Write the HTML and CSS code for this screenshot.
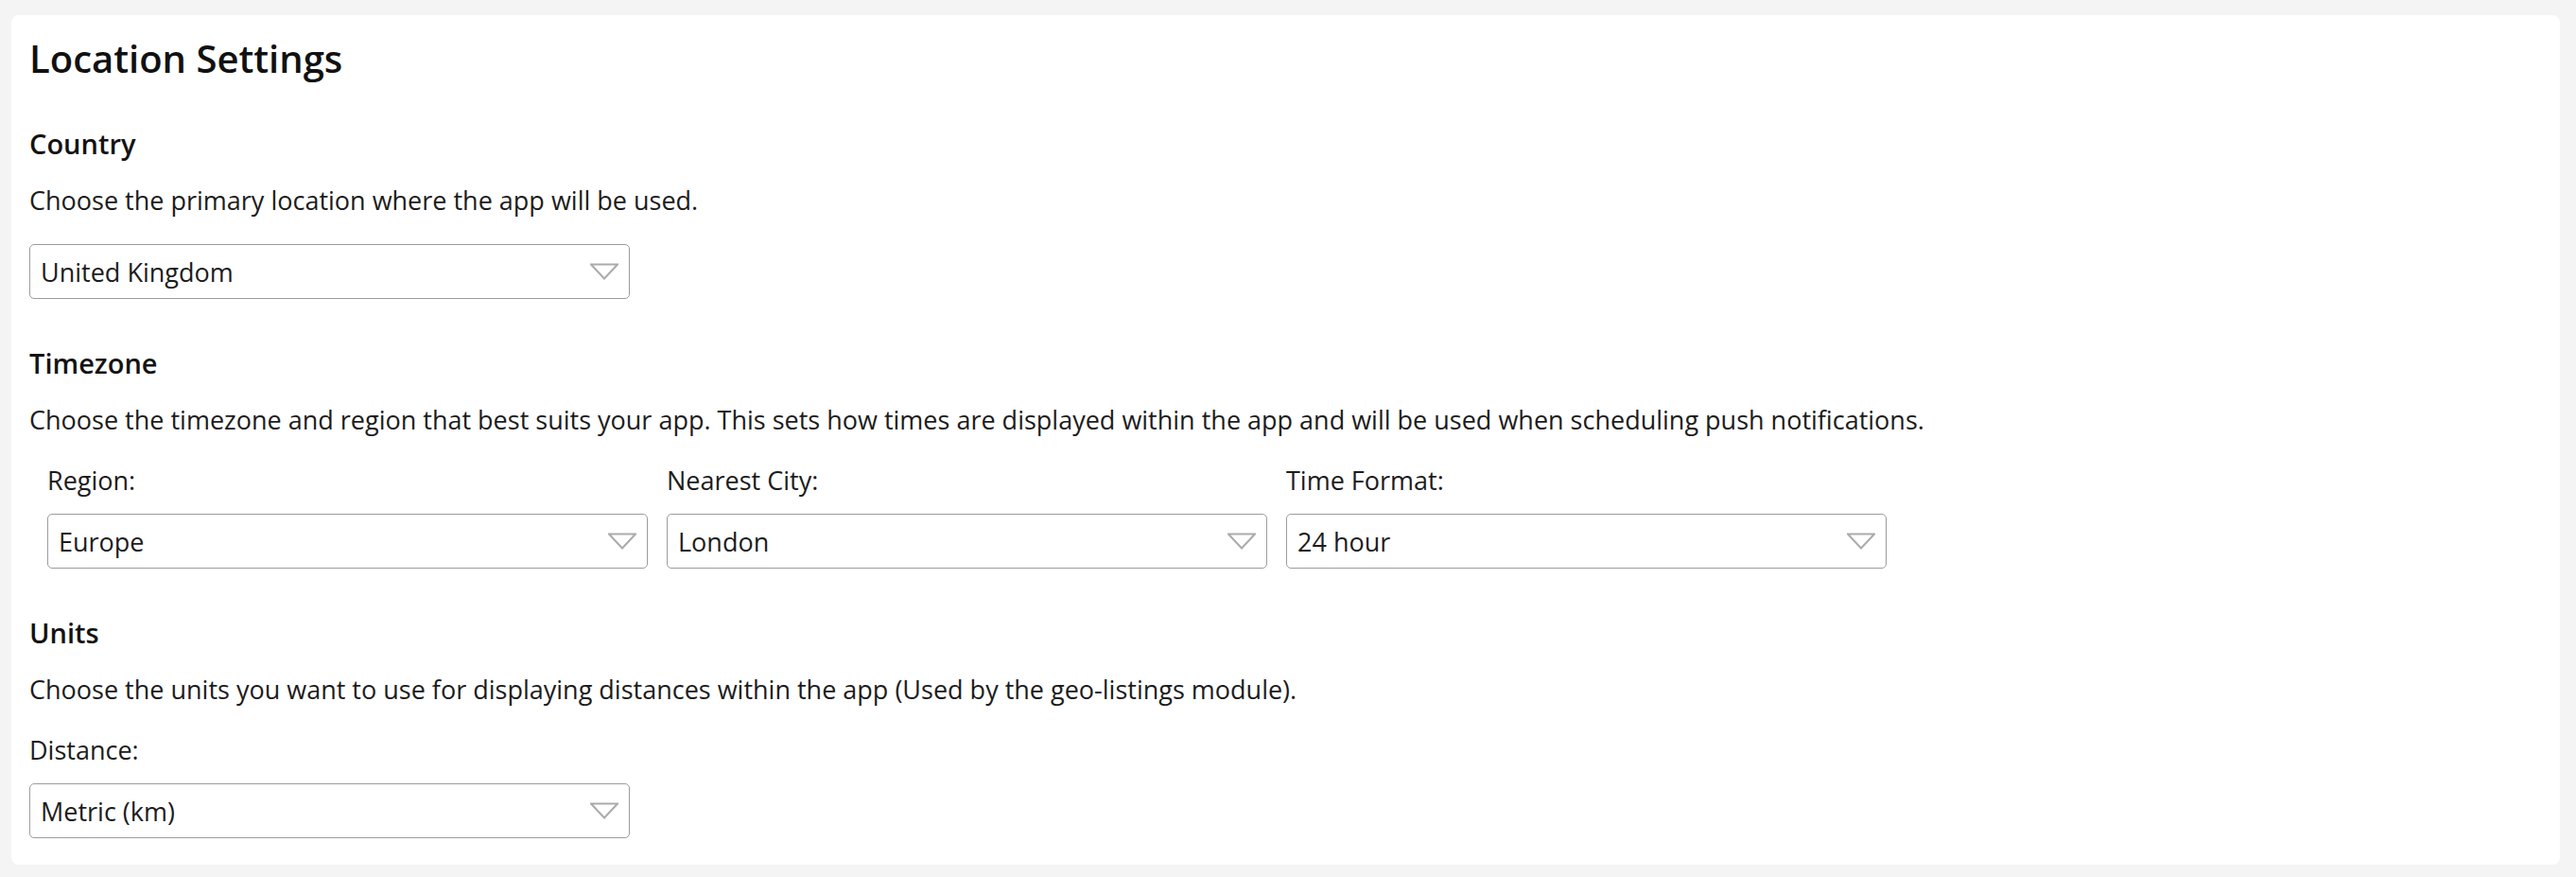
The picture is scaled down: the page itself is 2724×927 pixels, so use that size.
FILE: index.html
```html
<!DOCTYPE html>
<html lang="en">
<head>
<meta charset="utf-8">
<title>Location Settings</title>
<link rel="stylesheet" href="styles.css">
</head>
<body>
<div class="card">
  <h1 class="title">Location Settings</h1>

  <section class="section first">
    <h2 class="heading">Country</h2>
    <p class="desc">Choose the primary location where the app will be used.</p>
    <div class="select">
      <span class="value">United Kingdom</span>
      <svg class="arrow" width="30" height="18" viewBox="0 0 30 18"><polygon points="1,1.5 29,1.5 15,16.5" fill="none" stroke="#ababab" stroke-width="2"/></svg>
    </div>
  </section>

  <section class="section">
    <h2 class="heading">Timezone</h2>
    <p class="desc">Choose the timezone and region that best suits your app. This sets how times are displayed within the app and will be used when scheduling push notifications.</p>
    <div class="row">
      <div class="field">
        <label class="label">Region:</label>
        <div class="select">
          <span class="value">Europe</span>
          <svg class="arrow" width="30" height="18" viewBox="0 0 30 18"><polygon points="1,1.5 29,1.5 15,16.5" fill="none" stroke="#ababab" stroke-width="2"/></svg>
        </div>
      </div>
      <div class="field">
        <label class="label">Nearest City:</label>
        <div class="select">
          <span class="value">London</span>
          <svg class="arrow" width="30" height="18" viewBox="0 0 30 18"><polygon points="1,1.5 29,1.5 15,16.5" fill="none" stroke="#ababab" stroke-width="2"/></svg>
        </div>
      </div>
      <div class="field">
        <label class="label">Time Format:</label>
        <div class="select">
          <span class="value">24 hour</span>
          <svg class="arrow" width="30" height="18" viewBox="0 0 30 18"><polygon points="1,1.5 29,1.5 15,16.5" fill="none" stroke="#ababab" stroke-width="2"/></svg>
        </div>
      </div>
    </div>
  </section>

  <section class="section">
    <h2 class="heading">Units</h2>
    <p class="desc">Choose the units you want to use for displaying distances within the app (Used by the geo-listings module).</p>
    <div class="field">
      <label class="label">Distance:</label>
      <div class="select">
        <span class="value">Metric (km)</span>
        <svg class="arrow" width="30" height="18" viewBox="0 0 30 18"><polygon points="1,1.5 29,1.5 15,16.5" fill="none" stroke="#ababab" stroke-width="2"/></svg>
      </div>
    </div>
  </section>
</div>
</body>
</html>
```

FILE: styles.css
```css
html, body {
  margin: 0;
  padding: 0;
}
body {
  background: #f4f4f4;
  font-family: "Open Sans", "Noto Sans", "Liberation Sans", sans-serif;
  color: #1c1c1c;
  padding: 16px 17px 15px 12px;
}
.card {
  background: #ffffff;
  border-radius: 8px;
  padding: 18px 19px 28px 19px;
}
.title {
  margin: 0;
  font-size: 40px;
  font-weight: 600;
  line-height: normal;
  color: #111;
}
.section {
  margin-top: 48px;
}
.section.first {
  margin-top: 43px;
}
.heading {
  margin: 0 0 22px 0;
  font-size: 29px;
  font-weight: 600;
  line-height: normal;
  color: #131313;
}
.desc {
  margin: 0 0 27px 0;
  font-size: 27px;
  line-height: normal;
}
.section.first .desc {
  margin-bottom: 28px;
}
.row {
  display: flex;
  gap: 20px;
  margin-left: 19px;
}
.field {
  display: flex;
  flex-direction: column;
  width: 635px;
}
.label {
  font-size: 27px;
  line-height: normal;
  margin-bottom: 17px;
}
.select {
  box-sizing: border-box;
  width: 635px;
  height: 58px;
  border: 1px solid #9c9c9c;
  border-radius: 5px;
  display: flex;
  align-items: center;
  justify-content: space-between;
  padding: 0 11px 0 11px;
  font-size: 27px;
  background: #fff;
}
.value {
  line-height: normal;
}
.arrow {
  display: block;
  flex: none;
}
```
